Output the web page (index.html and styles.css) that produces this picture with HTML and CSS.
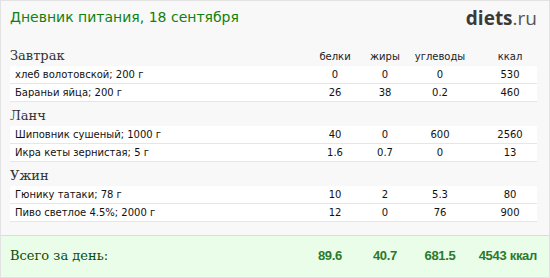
FILE: index.html
```html
<!DOCTYPE html>
<html lang="ru">
<head>
<meta charset="utf-8">
<link rel="stylesheet" href="styles.css">
</head>
<body>
<div class="card">
  <div class="top">
    <div class="title">Дневник питания, 18 сентября</div>
    <div class="logo"><b>diets</b><span>.ru</span></div>
  </div>

  <div class="meal">
    <div class="meal-head">
      <div class="meal-name">Завтрак</div>
      <div class="col">белки</div>
      <div class="col">жиры</div>
      <div class="col">углеводы</div>
      <div class="col kc">ккал</div>
    </div>
    <div class="row"><div class="name">хлеб волотовской; 200 г</div><div class="col">0</div><div class="col">0</div><div class="col">0</div><div class="col kc">530</div></div>
    <div class="row"><div class="name">Бараньи яйца; 200 г</div><div class="col">26</div><div class="col">38</div><div class="col">0.2</div><div class="col kc">460</div></div>
  </div>

  <div class="meal">
    <div class="meal-head">
      <div class="meal-name">Ланч</div>
    </div>
    <div class="row"><div class="name">Шиповник сушеный; 1000 г</div><div class="col">40</div><div class="col">0</div><div class="col">600</div><div class="col kc">2560</div></div>
    <div class="row"><div class="name">Икра кеты зернистая; 5 г</div><div class="col">1.6</div><div class="col">0.7</div><div class="col">0</div><div class="col kc">13</div></div>
  </div>

  <div class="meal">
    <div class="meal-head">
      <div class="meal-name">Ужин</div>
    </div>
    <div class="row"><div class="name">Гюнику татаки; 78 г</div><div class="col">10</div><div class="col">2</div><div class="col">5.3</div><div class="col kc">80</div></div>
    <div class="row"><div class="name">Пиво светлое 4.5%; 2000 г</div><div class="col">12</div><div class="col">0</div><div class="col">76</div><div class="col kc">900</div></div>
  </div>

  <div class="total">
    <div class="total-label">Всего за день:</div>
    <div class="col first">89.6</div>
    <div class="col">40.7</div>
    <div class="col">681.5</div>
    <div class="col sum">4543 ккал</div>
  </div>
</div>
</body>
</html>
```

FILE: styles.css
```css
html, body {
  margin: 0;
  padding: 0;
  background: #ffffff;
}

.card {
  width: 550px;
  height: 278px;
  box-sizing: border-box;
  border: 1px solid #e2e2e2;
  background: #f8f8f8;
  display: flex;
  flex-direction: column;
}

.top {
  display: flex;
  justify-content: space-between;
  align-items: flex-start;
  height: 42px;
  padding: 7px 12px 0 9px;
  box-sizing: border-box;
}

.title {
  font-family: "DejaVu Sans", Verdana, sans-serif;
  font-size: 14px;
  color: #11800f;
  line-height: 18px;
}

.logo {
  font-family: "Open Sans", sans-serif;
  font-size: 19px;
  line-height: 22px;
  color: #3a3a3a;
  margin-top: -1px;
}

.logo b {
  font-weight: 700;
}

.logo span {
  font-weight: 400;
  color: #555;
}

.meal {
  padding: 0 12px 0 9px;
}

.meal-head,
.row,
.total {
  display: grid;
  grid-template-columns: 1fr 50px 50px 60px 67px;
}

.meal-head {
  height: 23px;
  align-items: end;
  padding-bottom: 1px;
  box-sizing: border-box;
}

.meal + .meal .meal-head {
  height: 24px;
}

.meal-name {
  font-family: "DejaVu Serif", Georgia, serif;
  font-size: 13px;
  color: #333;
  line-height: 18px;
}

.meal-head .col {
  font-family: "DejaVu Sans", Verdana, sans-serif;
  font-size: 10px;
  color: #222;
  line-height: 16px;
}

.col {
  text-align: center;
  white-space: nowrap;
}

.kc {
  padding-left: 13px;
}

.row {
  height: 18px;
  box-sizing: border-box;
  background: #ffffff;
  border-bottom: 1px solid #e6e6e6;
  font-family: "DejaVu Sans", Verdana, sans-serif;
  font-size: 10px;
  color: #111;
  line-height: 17px;
  align-items: center;
}

.name {
  padding-left: 5px;
}

.total {
  margin-top: auto;
  height: 42px;
  box-sizing: border-box;
  border-top: 1px solid #dcdcdc;
  background: #e9fde9;
  padding: 0 12px 3px 9px;
  align-items: center;
}

.total-label {
  font-family: "DejaVu Serif", Georgia, serif;
  font-size: 13px;
  color: #0b4f0b;
}

.total .col {
  font-family: "Liberation Sans", Arial, sans-serif;
  font-weight: 700;
  font-size: 13px;
  letter-spacing: -0.3px;
  color: #2b7a2b;
}

.total .first {
  padding-right: 10px;
}

.total .sum {
  text-align: right;
}
```
